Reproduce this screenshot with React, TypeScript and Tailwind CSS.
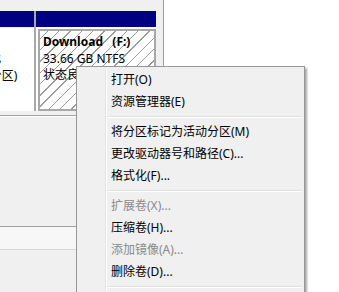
const hatch =
  "bg-white bg-[repeating-linear-gradient(135deg,#ffffff_0px,#ffffff_5px,#9a9a9a_5px,#9a9a9a_6px,#ffffff_6px,#ffffff_8px)]";

type Item = { label: string; disabled?: boolean } | "sep";

const items: Item[] = [
  { label: "打开(O)" },
  { label: "资源管理器(E)" },
  "sep",
  { label: "将分区标记为活动分区(M)" },
  { label: "更改驱动器号和路径(C)..." },
  { label: "格式化(F)..." },
  "sep",
  { label: "扩展卷(X)...", disabled: true },
  { label: "压缩卷(H)..." },
  { label: "添加镜像(A)...", disabled: true },
  { label: "删除卷(D)..." },
  "sep",
  { label: "属性(P)" },
  "sep",
  { label: "帮助(H)" },
];

const ContextMenu = () => {
  return (
    <div className="absolute left-[76px] top-[66px] w-[229px] border border-[#979797] bg-[#f0f0f0] p-[2px] shadow-[2px_2px_2px_rgba(0,0,0,0.35)]">
      <div className="flex">
        <div className="w-[26px] shrink-0" />
        <div className="w-px shrink-0 bg-[#e2e3e3]" />
        <div className="w-px shrink-0 bg-white" />
        <div className="flex-1 flex flex-col">
          {items.map((it, i) =>
            it === "sep" ? (
              <div key={i} className="h-[8px] flex flex-col justify-center">
                <div className="h-px bg-[#e0e0e0]" />
                <div className="h-px bg-white" />
              </div>
            ) : (
              <div
                key={i}
                className={`h-[22px] flex items-center pl-[4px] text-[12px] leading-none whitespace-nowrap ${
                  it.disabled ? "text-[#8a8a8a]" : "text-black"
                }`}
              >
                {it.label}
              </div>
            )
          )}
        </div>
      </div>
    </div>
  );
};

export default function App() {
  return (
    <div
      className="relative w-[339px] h-[292px] overflow-hidden bg-white"
      style={{ fontFamily: '"Noto Sans", "Noto Sans CJK SC", sans-serif' }}
    >
      <div className="flex h-full">
        {/* graphical disk view */}
        <div className="w-[164px] h-full flex flex-col bg-[#f0f0f0] border-r border-[#a0a0a0]">
          <div className="h-[11px] shrink-0" />
          <div className="flex h-[100px] shrink-0">
            {/* partition cut off on the left */}
            <div className="w-[34px] flex flex-col">
              <div className="h-[16px] bg-[#000080]" />
              <div className="flex-1 mt-[1px] bg-white overflow-hidden text-[12px] leading-[16.5px] text-black">
                <div className="pt-[7px] whitespace-nowrap">
                  <div className="font-bold">&nbsp;</div>
                  <div className="-ml-[81px]">49.99 GB NTFS</div>
                  <div className="-ml-[77px]">状态良好 (主分区)</div>
                </div>
              </div>
            </div>
            <div className="w-[2px] bg-[#a8a8a8]" />
            {/* selected partition */}
            <div className="w-[120px] flex flex-col">
              <div className="h-[16px] bg-[#000080]" />
              <div className="flex-1 bg-white pt-[2px] pl-[2px]">
                <div
                  className={`h-full border-2 border-[#a8a8a8] overflow-hidden pl-[3px] pt-[3px] text-[12px] leading-[16.5px] text-black whitespace-nowrap ${hatch}`}
                >
                  <div className="font-bold">Download&nbsp;&nbsp;&nbsp;(F:)</div>
                  <div>33.66 GB NTFS</div>
                  <div>状态良好 (主分区)</div>
                </div>
              </div>
            </div>
          </div>
          <div className="h-[4px] shrink-0" />
          <div className="h-px shrink-0 bg-[#a0a0a0]" />
          <div className="h-px shrink-0 bg-white" />
          <div className="h-[109px] shrink-0" />
          <div className="h-px shrink-0 bg-[#a0a0a0]" />
          <div className="h-[22px] shrink-0 bg-[#f7f7f7]" />
          <div className="h-px shrink-0 bg-[#d8d8d8]" />
          <div className="flex-1" />
        </div>
        <div className="flex-1 bg-white" />
      </div>
      <ContextMenu />
    </div>
  );
}
